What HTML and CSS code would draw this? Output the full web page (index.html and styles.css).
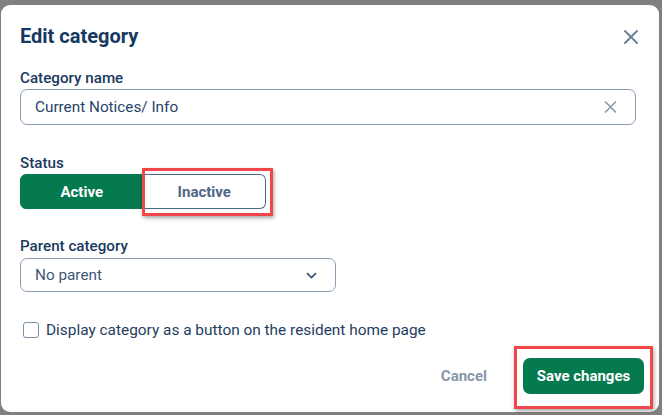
FILE: index.html
```html
<!DOCTYPE html>
<html>
<head>
<meta charset="utf-8">
<link rel="stylesheet" href="styles.css">
</head>
<body>
<div class="dialog">
  <div class="header">
    <h1 class="title">Edit category</h1>
    <button class="close" aria-label="Close">
      <svg width="14" height="14" viewBox="0 0 14 14"><path d="M1 1L13 13M13 1L1 13" stroke="#6d8399" stroke-width="2" fill="none" stroke-linecap="round"/></svg>
    </button>
  </div>

  <label class="label lbl-name">Category name</label>
  <div class="input">
    <span class="input-text">Current Notices/ Info</span>
    <svg class="clear" width="13" height="12" viewBox="0 0 13 12"><path d="M1 0.5L12 11.5M12 0.5L1 11.5" stroke="#8a9bb0" stroke-width="1.6" fill="none"/></svg>
  </div>

  <label class="label lbl-status">Status</label>
  <div class="toggle">
    <button class="seg seg-active">Active</button>
    <button class="seg seg-inactive">Inactive<span class="mark mark-inactive"></span></button>
  </div>

  <label class="label lbl-parent">Parent category</label>
  <div class="select">
    <span class="select-text">No parent</span>
    <svg class="chev" width="11" height="7" viewBox="0 0 11 7"><path d="M1 1.2L5.5 5.5L10 1.2" stroke="#3b5270" stroke-width="1.7" fill="none"/></svg>
  </div>

  <div class="check-row">
    <span class="checkbox"></span>
    <span class="check-text">Display category as a button on the resident home page</span>
  </div>

  <div class="footer">
    <button class="btn-cancel">Cancel</button>
    <button class="btn-save">Save changes<span class="mark mark-save"></span></button>
  </div>
</div>
</body>
</html>
```

FILE: styles.css
```css
* { box-sizing: border-box; }
html, body { margin: 0; padding: 0; }
body {
  background: #808080;
  width: 662px;
  height: 415px;
  overflow: hidden;
  font-family: Roboto, "Liberation Sans", sans-serif;
  color: #1a3a5e;
}
.dialog {
  position: relative;
  margin: 5px 0 0 1px;
  width: 658px;
  height: 407px;
  background: #fff;
  border-radius: 9px;
  padding: 19px 23px 0 19px;
  display: flex;
  flex-direction: column;
  align-items: flex-start;
}
.header {
  display: flex;
  justify-content: space-between;
  align-items: center;
  width: 100%;
  height: 24px;
}
.title {
  margin: 0;
  font-size: 20px;
  line-height: 24px;
  font-weight: 700;
  color: #15395f;
}
.close {
  border: 0;
  background: none;
  padding: 0;
  width: 14px;
  height: 14px;
  margin-right: -2px;
  margin-top: 1px;
  display: flex;
}
.label {
  display: block;
  font-size: 15.2px;
  line-height: 20px;
  font-weight: 500;
  color: #1a3a5e;
}
.lbl-name { margin-top: 20px; margin-bottom: 1px; }
.lbl-status { margin-top: 28px; margin-bottom: 1px; }
.lbl-parent { margin-top: 27px; margin-bottom: 2px; }

.input {
  width: 100%;
  height: 36px;
  border: 1px solid #8c9db3;
  border-radius: 7px;
  display: flex;
  align-items: center;
  justify-content: space-between;
  padding: 0 18px 0 14px;
}
.input-text {
  font-size: 15.3px;
  color: #27446a;
}
.clear { display: block; }

.toggle {
  display: flex;
  width: 246px;
  height: 35px;
}
.seg {
  position: relative;
  flex: 1;
  height: 35px;
  font-family: inherit;
  font-size: 15px;
  font-weight: 700;
  padding: 0;
}
.seg-active {
  background: #067a4f;
  color: #fff;
  border: 1px solid #067a4f;
  border-radius: 6px 0 0 6px;
}
.seg-inactive {
  background: #fff;
  color: #4e6786;
  border: 1px solid #4e6786;
  border-left: 0;
  border-radius: 0 6px 6px 0;
}
.mark {
  position: absolute;
  border: 3px solid #f2474a;
  box-shadow: 1px 2px 4px rgba(0,0,0,0.35);
  pointer-events: none;
}
.mark-inactive {
  left: -2px;
  right: -8px;
  top: -7px;
  bottom: -8px;
}

.select {
  width: 316px;
  height: 34px;
  border: 1px solid #8c9db3;
  border-radius: 7px;
  display: flex;
  align-items: center;
  justify-content: space-between;
  padding: 0 18px 0 14px;
}
.select-text {
  font-size: 15.3px;
  color: #3f5878;
}
.chev { display: block; }

.check-row {
  margin-top: 28px;
  display: flex;
  align-items: center;
  height: 20px;
  padding-left: 3px;
}
.checkbox {
  width: 16px;
  height: 16px;
  border: 1.5px solid #7a8fa8;
  border-radius: 3px;
  margin-right: 7px;
}
.check-text {
  font-size: 15.4px;
  line-height: 20px;
  color: #1f3d62;
}

.footer {
  margin-top: 18px;
  align-self: stretch;
  margin-right: -8px;
  display: flex;
  justify-content: flex-end;
  align-items: center;
  gap: 4px;
}
.btn-cancel {
  border: 0;
  background: none;
  font-family: inherit;
  font-size: 15px;
  font-weight: 700;
  color: #8797aa;
  padding: 0 32px 0 0;
  height: 36px;
}
.btn-save {
  position: relative;
  border: 0;
  background: #067a4f;
  color: #fff;
  font-family: inherit;
  font-size: 15px;
  font-weight: 700;
  height: 36px;
  width: 121px;
  padding: 0;
  border-radius: 7px;
}
.mark-save {
  left: -9px;
  right: -9px;
  top: -12px;
  bottom: -15px;
}
```
